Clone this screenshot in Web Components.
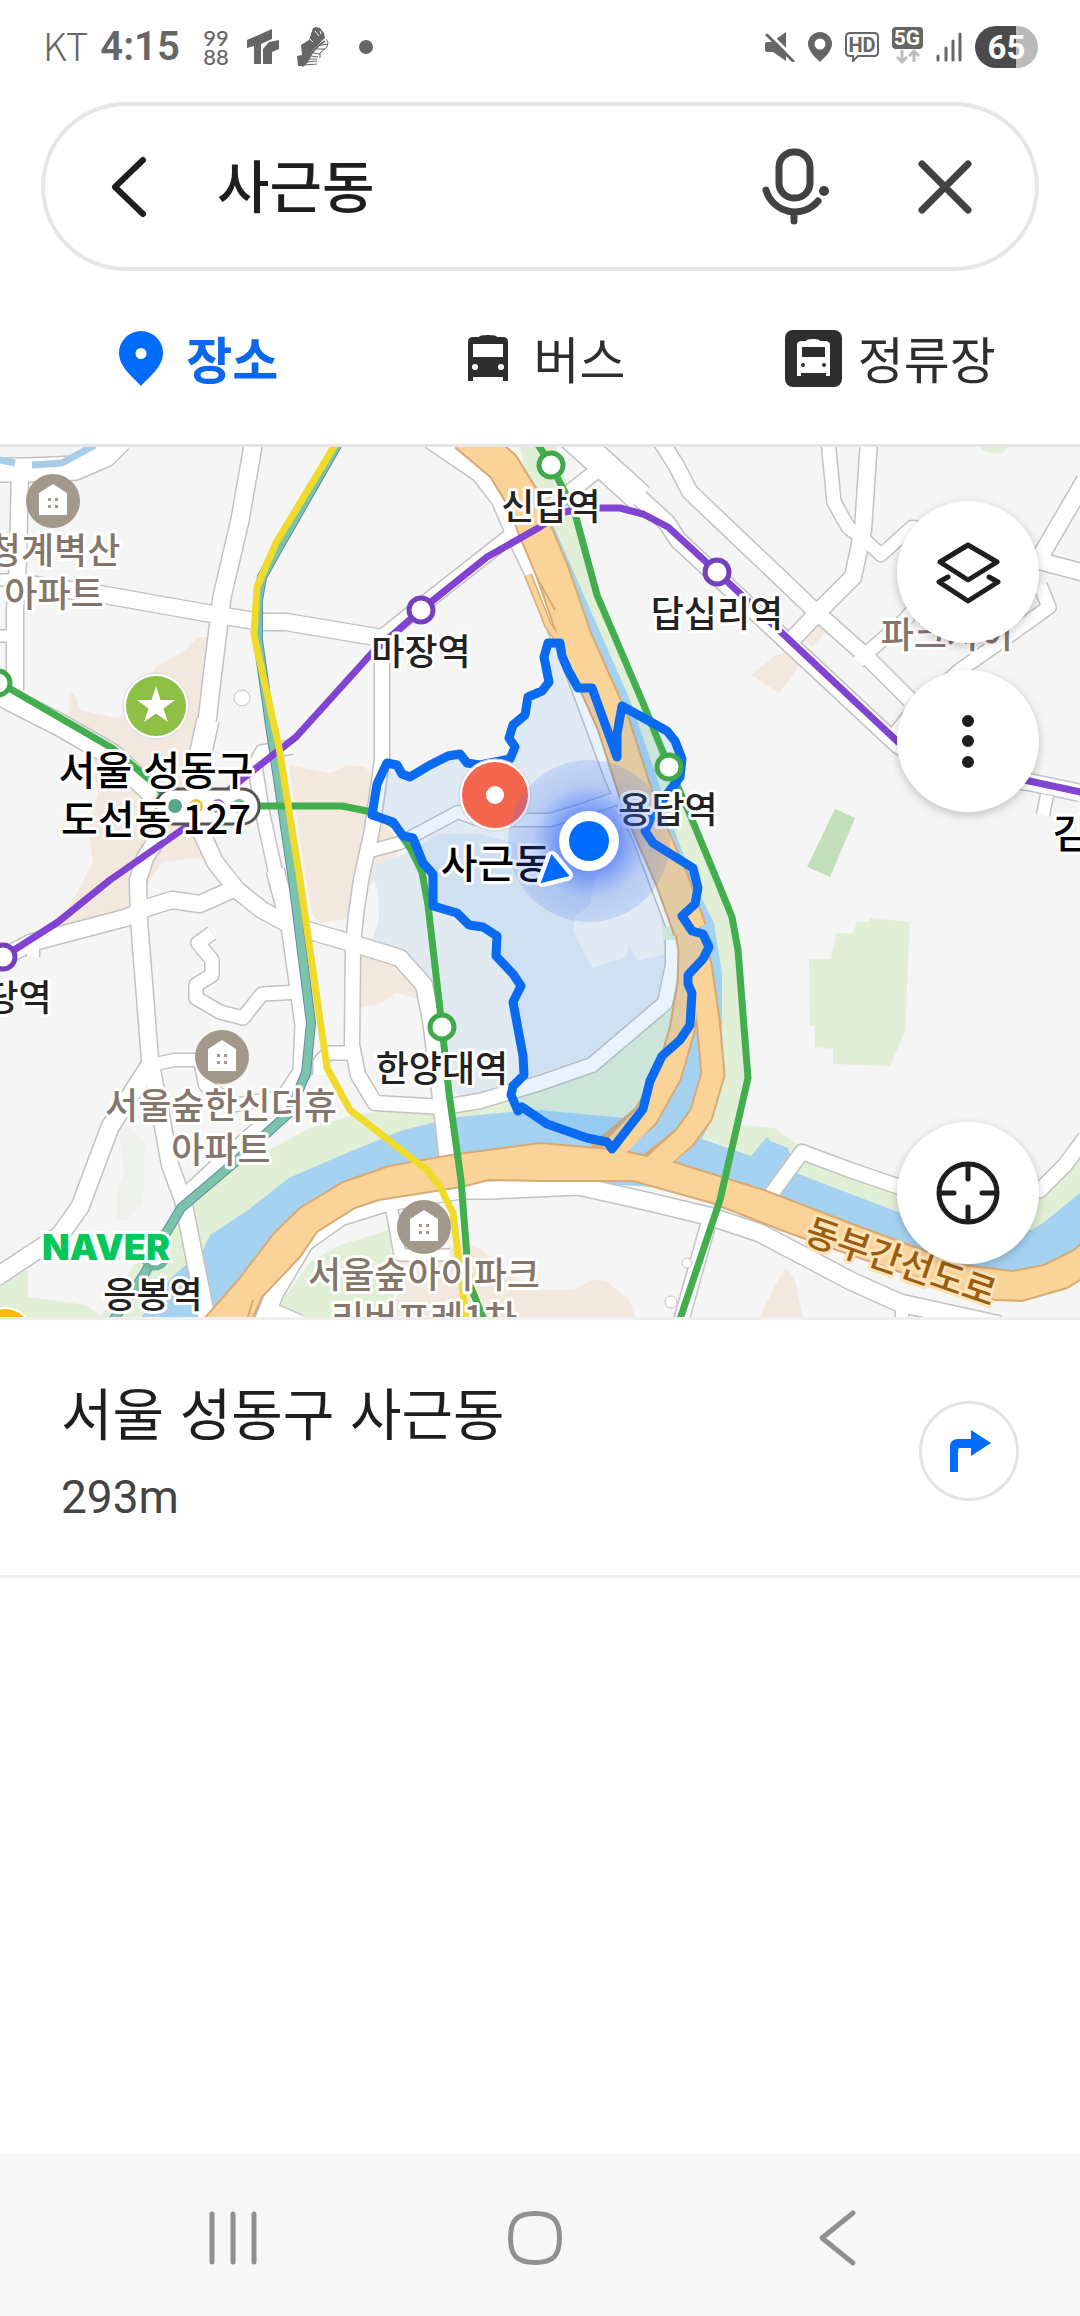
<!DOCTYPE html>
<html lang="ko">
<head>
<meta charset="utf-8">
<meta name="viewport" content="width=device-width, initial-scale=1">
<title>사근동</title>
<style>
    body {
        margin: 0;
        background: #fff;
        color: #1e1e1e;
        font-family: "Noto Sans CJK KR", "Noto Sans", sans-serif;
    }
</style>
</head>
<body>
<map-app>
    <status-bar slot="top" carrier="KT" time="4:15" battery="65"></status-bar>
    <search-bar slot="top" value="사근동"></search-bar>
    <search-tabs slot="top">
        <search-tab icon="place" selected>장소</search-tab>
        <search-tab icon="bus">버스</search-tab>
        <search-tab icon="stop">정류장</search-tab>
    </search-tabs>
    <area-map></area-map>
    <place-result distance="293m">서울 성동구 사근동</place-result>
    <system-nav slot="bottom"></system-nav>
</map-app>

<script>
class MapApp extends HTMLElement {
    constructor() {
        super();
        this.attachShadow({mode: 'open'});
        this.shadowRoot.innerHTML = `
            <style>
                :host { display: flex; flex-direction: column; min-height: 100vh; }
                header { border-bottom: 3px solid #e5e5e5; }
                main { flex: 1; }
            </style>
            <header><slot name="top"></slot></header>
            <main><slot></slot></main>
            <slot name="bottom"></slot>
            `;
    }
}
customElements.define("map-app", MapApp);

class StatusBar extends HTMLElement {
    constructor() {
        super();
        this.attachShadow({mode: 'open'});
        this.shadowRoot.innerHTML = `
            <style>
                :host {
                    display: flex;
                    align-items: center;
                    justify-content: space-between;
                    height: 94px;
                    padding: 0 42px 8px 43px;
                    color: #666;
                }
                div { display: flex; align-items: center; }
                .texts { gap: 12px; font-size: 38px; line-height: 48px; }
                .carrier { font-weight: 300; padding-bottom: 4px; }
                .time { font-family: Roboto, sans-serif; font-size: 40px; font-weight: 600; }
                .apps { gap: 18px; margin-left: 23px; }
                .icons { gap: 13px; }
                .dot { width: 14px; height: 14px; border-radius: 50%; background: currentColor; margin-left: 12px; }
                .battery {
                    width: 63px;
                    height: 42px;
                    border-radius: 21px;
                    justify-content: center;
                    color: #fff;
                    font: bold 33px Roboto, sans-serif;
                    background: linear-gradient(90deg, #4b4b4b 65%, #bababa 65%);
                }
                svg { display: block; fill: currentColor; }
            </style>
            <div>
                <div class="texts"><span class="carrier"></span><span class="time"></span></div>
                <div class="apps">
                    <svg width="26" height="50" viewBox="0 0 26 50" font-family="Lato, sans-serif" font-size="22" font-weight="500">
                        <text x="13" y="24" text-anchor="middle">99</text>
                        <text x="13" y="43" text-anchor="middle">88</text>
                    </svg>
                    <svg width="32" height="36" viewBox="0 0 32 36">
                        <path d="M0 11L25 0V10L14 15V35H7V17L0 19Z"/>
                        <path d="M16 35V20L22 13L32 11V20L25 23V35Z"/>
                    </svg>
                    <svg width="32" height="40" viewBox="0 0 32 40">
                        <path d="M16 1L19 0L23 1L27 6L28 11C24 15 17 21 14 26C11 31 8 37 6 39H1L0 29L5 28L4 18L12 13Z"/>
                        <path d="M18 4L22 9M23 4L24 7M13 12L16 15" fill="none" stroke="#fff" stroke-width="1"/>
                        <path d="M28 14C20 19 15 25 12 31C10 35 8 38 5 39" fill="none" stroke="currentColor" stroke-width="2"/>
                        <path d="M20 19L30 17M18 22L28 22M16 26L23 27M14 29L21 30M12 32H20M10 35L20 34M7 38L20 37M29 12L31 15L30 20L23 26V31" fill="none" stroke="currentColor" stroke-width="1"/>
                    </svg>
                    <i class="dot"></i>
                </div>
            </div>
            <div class="icons">
                <svg width="30" height="30" viewBox="0 0 30 30">
                    <path d="M2 10H7L21 0V29L8 20H2Q0 20 0 17V13Q0 10 2 10Z"/>
                    <path d="M4 1L30 27" stroke="#fff" stroke-width="3"/>
                    <path d="M2 3L28 29" stroke="currentColor" stroke-width="3" stroke-linecap="round"/>
                </svg>
                <svg width="24" height="30" viewBox="0 0 24 30">
                    <path fill-rule="evenodd" d="M12 0A12 12 0 0 1 24 12C24 19 16 26 12 30C8 26 0 19 0 12A12 12 0 0 1 12 0ZM12 6.500A5.500 5.500 0 1 0 12 17.500A5.500 5.500 0 1 0 12 6.500Z"/>
                </svg>
                <svg width="34" height="30" viewBox="0 0 34 30">
                    <path d="M5 1H29Q33 1 33 5V20Q33 24 29 24H13L8 29V24H5Q1 24 1 20V5Q1 1 5 1Z" fill="none" stroke="currentColor" stroke-width="2"/>
                    <text x="17" y="20" text-anchor="middle" font-family="Roboto, sans-serif" font-weight="bold" font-size="20">HD</text>
                </svg>
                <svg width="31" height="44" viewBox="0 0 31 44">
                    <rect y="2" width="31" height="22" rx="4"/>
                    <text x="15" y="20" text-anchor="middle" fill="#fff" font-family="Roboto, sans-serif" font-weight="bold" font-size="21">5G</text>
                    <path d="M10 25V36M5 32L10 37L15 32M22 37V26M17 31L22 26L27 31" fill="none" stroke="#bdbdbd" stroke-width="3"/>
                </svg>
                <svg width="26" height="30" viewBox="0 0 26 30">
                    <path d="M2 24V28M10 16V28M17 9V28M24 2V28" stroke="currentColor" stroke-width="3" stroke-linecap="round"/>
                </svg>
                <div class="battery"></div>
            </div>
            `;
    }
    connectedCallback() {
        this.shadowRoot.querySelector('.carrier').textContent = this.getAttribute('carrier');
        this.shadowRoot.querySelector('.time').textContent = this.getAttribute('time');
        this.shadowRoot.querySelector('.battery').textContent = this.getAttribute('battery');
    }
}
customElements.define("status-bar", StatusBar);

class SearchBar extends HTMLElement {
    constructor() {
        super();
        this.attachShadow({mode: 'open'});
        this.shadowRoot.innerHTML = `
            <style>
                :host { display: block; margin: 0 41px; }
                form {
                    display: flex;
                    align-items: center;
                    box-sizing: border-box;
                    height: 169px;
                    padding: 0 58px 0 52px;
                    border: 4px solid #e6e6e6;
                    border-radius: 85px;
                }
                button { flex: none; width: 64px; height: 80px; padding: 0; border: 0; background: none; }
                input {
                    flex: 1;
                    min-width: 0;
                    height: 84px;
                    margin: 0 24px 0 56px;
                    padding: 0 0 8px;
                    border: 0;
                    outline: 0;
                    background: none;
                    color: #1e1e1e;
                    font: 500 57px "Noto Sans CJK KR", sans-serif;
                }
                .clear { margin-left: 86px; }
                svg { display: block; overflow: visible; fill: none; stroke: #424242; stroke-width: 7; stroke-linecap: round; stroke-linejoin: round; }
                .back svg { stroke: #1e1e1e; stroke-width: 6; }
            </style>
            <form>
                <button type="button" class="back" aria-label="뒤로">
                    <svg width="64" height="80" viewBox="0 0 64 80"><path d="M46 13L18 40L46 67"/></svg>
                </button>
                <input type="text" aria-label="검색">
                <button type="button" aria-label="음성 검색">
                    <svg width="64" height="80" viewBox="0 0 64 80">
                        <rect x="16" y="5" width="31" height="46" rx="15"/>
                        <path d="M3 43A30 30 0 0 0 55 54M31 66V74"/>
                        <circle cx="61" cy="44" r="5" fill="#424242" stroke="none"/>
                    </svg>
                </button>
                <button type="button" class="clear" aria-label="지우기">
                    <svg width="64" height="80" viewBox="0 0 64 80"><path d="M9 17L55 63M55 17L9 63"/></svg>
                </button>
            </form>
            `;
    }
    connectedCallback() {
        const input = this.shadowRoot.querySelector('input');
        input.value = this.getAttribute('value');
        this.shadowRoot.querySelector('.clear').addEventListener('click', () => { input.value = ''; });
    }
}
customElements.define("search-bar", SearchBar);

class SearchTabs extends HTMLElement {
    constructor() {
        super();
        this.attachShadow({mode: 'open'});
        this.shadowRoot.innerHTML = `
            <style>
                :host { display: block; }
                nav { display: grid; grid-template-columns: repeat(3, 1fr); padding: 0 16px 0 22px; height: 173px; align-items: center; }
            </style>
            <nav><slot></slot></nav>
            `;
    }
}
customElements.define("search-tabs", SearchTabs);

const TAB_ICONS = {
    place: `<path fill="#006cff" fill-rule="evenodd" d="M28 1A22 22 0 0 1 50 23C50 37 36 47 28 56C20 47 6 37 6 23A22 22 0 0 1 28 1ZM28 18A5.500 5.500 0 1 0 28 29A5.500 5.500 0 1 0 28 18Z"/>`,
    bus: `<path fill="#2e2e2e" fill-rule="evenodd" d="M19 7Q19 5 28 5Q37 5 37 7H43Q48 7 48 12V51H43V47H13V51H8V12Q8 7 13 7H19ZM13 14V27H43V14ZM15 34A3 3 0 1 0 15 40A3 3 0 1 0 15 34ZM41 34A3 3 0 1 0 41 40A3 3 0 1 0 41 34Z"/>`,
    stop: `<rect width="57" height="57" rx="8" fill="#2e2e2e"/>
        <path fill="#fff" fill-rule="evenodd" d="M21 11Q21 9 28 9Q35 9 35 11H40Q45 11 45 15V46H41V43H16V46H12V15Q12 11 17 11H21ZM17 17V27H40V17ZM18 33A2 2 0 1 0 18 37A2 2 0 1 0 18 33ZM39 33A2 2 0 1 0 39 37A2 2 0 1 0 39 33Z"/>`
};

class SearchTab extends HTMLElement {
    constructor() {
        super();
        this.attachShadow({mode: 'open'});
        this.shadowRoot.innerHTML = `
            <style>
                :host { display: flex; justify-content: center; }
                button {
                    display: flex;
                    align-items: center;
                    gap: 16px;
                    padding: 2px 0 0;
                    border: 0;
                    background: none;
                    color: #2e2e2e;
                    font: 400 50px/72px "Noto Sans CJK KR", sans-serif;
                }
                :host([selected]) button { color: #0a68ee; font-weight: 700; }
                span { padding-bottom: 4px; }
                svg { display: block; }
            </style>
            <button type="button"><svg width="57" height="57" viewBox="0 0 57 57"></svg><span><slot></slot></span></button>
            `;
    }
    connectedCallback() {
        this.shadowRoot.querySelector('svg').innerHTML = TAB_ICONS[this.getAttribute('icon')];
    }
}
customElements.define("search-tab", SearchTab);

// [width, path], every street gets a grey casing under a white fill
const STREETS = [
    [18, "M254 440L240 520L222 597L213 670L206 730"],
    [22, "M208 720L198 765V830"],
    [17, "M198 825L215 862L237 890L262 910L290 925L358 945L400 958L424 985L431 1020L440 1090L448 1160"],
    [17, "M20 583L105 595L212 614L262 622L286 622L382 638"],
    [15, "M382 637L420 607L509 537L560 500L600 468"],
    [17, "M430 440L480 474L500 500L515 535L546 600L560 640"],
    [13, "M546 600L560 640L612 780L640 840L672 925"],
    [28, "M570 435L607 468L640 498"],
    [17, "M607 468L667 523L678 540L764 620L898 745L940 770L1029 782L1080 793"],
    [16, "M660 440L676 465L690 492L812 608L867 657L910 700"],
    [14, "M828 440L834 502L848 527L862 538"],
    [17, "M869 440L863 530L853 577L820 610L790 642"],
    [13, "M865 540L881 555L912 527L930 530"],
    [17, "M1085 480L1043 552V562L1085 573"],
    [14, "M1040 585L1049 607L1010 635L960 670L910 715L890 740"],
    [14, "M858 662L867 653L905 620L915 608"],
    [13, "M1047 795L1043 815"],
    [17, "M20 470L18 560L15 610V690"],
    [12, "M-5 636H16"],
    [12, "M-5 580H16"],
    [24, "M-5 470H30L75 468L105 455L120 440"],
    [22, "M-5 692L60 725L112 755L155 795"],
    [15, "M382 637V760L372 830L361 880L356 915L353 945L352 1045L358 1075L375 1103L444 1107L480 1101L540 1083L592 1065L665 1003L673 965V940"],
    [13, "M370 851L400 843L458 812L480 820H550L580 811L620 797"],
    [14, "M292 747L262 752L255 765L262 810L275 870L290 925"],
    [18, "M275 870L290 925L304 1025L302 1072L270 1120L220 1165L188 1195"],
    [17, "M160 835L145 858L138 880L139 920L150 1060L160 1110L170 1165L183 1200L208 1325"],
    [17, "M140 910L172 900L200 904L240 886"],
    [17, "M140 912L125 918L30 943L-5 962"],
    [13, "M33 945V957"],
    [14, "M212 933L198 943L212 960V975L196 985V998L220 1012L243 1018L262 994L300 992"],
    [13, "M155 1064L175 1060H200L205 1085L235 1105L290 1095"],
    [18, "M150 1065L110 1127L80 1207L60 1235L-5 1278"],
    [14, "M320 1075V1062L328 1053H352"],
    [18, "M262 1325L275 1292L305 1242L340 1217L388 1202L460 1190H490L578 1186L650 1202L712 1217L760 1233L851 1281L900 1303L1000 1325"],
    [12, "M392 1210L400 1255H450"],
    [15, "M708 1225L680 1325"],
    [13, "M902 1305V1325"],
    [14, "M268 1308L300 1322"],
    [15, "M767 1200L802 1152L850 1170L900 1187L980 1200L1040 1190L1065 1165L1085 1138"]
];

// [x, y, line colour]
const STATIONS = [
    [551, 465, "#41a84c"], [421, 610, "#7540bd"], [717, 572, "#7540bd"], [669, 767, "#41a84c"],
    [442, 1027, "#41a84c"], [-2, 683, "#41a84c"], [3, 957, "#7540bd"], [155, 1256, "#6db59c"]
];

const APARTMENTS = [[53, 501], [222, 1057], [424, 1227]];

// [kind, x, baseline, text]
const LABELS = [
    ["station", 551, 520, "신답역"],
    ["station", 421, 665, "마장역"],
    ["station", 717, 627, "답십리역"],
    ["station", 668, 823, "용답역"],
    ["station", 442, 1082, "한양대역"],
    ["station", 153, 1308, "응봉역"],
    ["station", 2, 1011, "신당역"],
    ["apartment", 54, 564, "청계벽산"],
    ["apartment", 54, 607, "아파트"],
    ["apartment", 221, 1119, "서울숲한신더휴"],
    ["apartment", 221, 1163, "아파트"],
    ["apartment", 424, 1288, "서울숲아이파크"],
    ["apartment", 424, 1332, "리버프레1차"],
    ["apartment", 947, 648, "파크자이"],
    ["place", 156, 785, "서울 성동구"],
    ["place", 156, 834, "도선동 127"],
    ["place", 496, 878, "사근동"],
    ["place", 1071, 848, "김"]
];

const DISTRICT = `M548 643H560L562 656L568 670L578 688H592L617 757V734L622 706L667 731L675 741L682 759L680 777
    L653 813L645 831L653 843L693 868L698 888L695 904L682 916L692 931L703 934L709 947L703 959L688 975V984L692 993
    L690 1025L680 1040L662 1056L650 1081L643 1109L612 1149L607 1142L587 1138L547 1124L522 1107L518 1111L511 1095
    L513 1086L524 1075L523 1056L513 1002L521 986L513 974L496 956L497 936L483 927L469 925L457 913L433 906V874
    L423 863L413 838L403 836L393 822L372 815L377 784L387 763L397 765L402 774L410 777L430 765L448 756L460 754
    L467 763L480 765L510 759L515 747L509 738L513 725L525 715L528 697L542 691L549 682L544 657Z`;

class AreaMap extends HTMLElement {
    constructor() {
        super();
        this.attachShadow({mode: 'open'});
        const casings = STREETS.map(([w, d]) => `<path d="${d}" stroke-width="${w + 2}"/>`).join('');
        const fills = STREETS.map(([w, d]) => `<path d="${d}" stroke-width="${w - 1}"/>`).join('');
        const stations = STATIONS.map(([x, y, c]) => `<circle cx="${x}" cy="${y}" r="12" stroke="${c}"/>`).join('');
        const houses = APARTMENTS.map(([x, y]) => `<use href="#house" x="${x}" y="${y}"/>`).join('');
        const labels = LABELS.map(([kind, x, y, text]) => `<text class="${kind}" x="${x}" y="${y}">${text}</text>`).join('');
        this.shadowRoot.innerHTML = `
            <style>
                :host { display: block; position: relative; overflow: hidden; border-bottom: 3px solid #efefef; }
                .map { display: block; width: 100%; height: auto; background: #f5f5f5; }
                .line { fill: none; stroke-linejoin: round; }
                .beige { fill: #f3e8de; }
                .green { fill: #e1efd7; }
                .water { fill: #a6d2f2; }
                text {
                    text-anchor: middle;
                    font-family: "Noto Sans CJK KR", sans-serif;
                    font-size: 36px;
                    font-weight: 500;
                    paint-order: stroke;
                    stroke: #fff;
                    stroke-width: 6px;
                    stroke-linejoin: round;
                }
                .station { fill: #222; }
                .apartment { fill: #85766c; }
                .place { fill: #000; font-size: 40px; }
                .highway { fill: #9b5d10; stroke: #fde3b8; }
                .logo { fill: #03c75a; font-family: Inter, sans-serif; font-size: 36px; font-weight: 900; }
                .controls {
                    position: absolute;
                    inset: 54px 41px 53px auto;
                    display: flex;
                    flex-direction: column;
                    gap: 27px;
                }
                button {
                    width: 142px;
                    height: 142px;
                    padding: 0;
                    border: 0;
                    border-radius: 50%;
                    background: #fff;
                    box-shadow: 0 3px 10px rgba(0, 0, 0, .22);
                }
                button:last-child { margin-top: auto; }
                button svg { display: block; fill: none; stroke: #1e1e1e; stroke-width: 5; stroke-linecap: round; stroke-linejoin: round; }
            </style>
            <svg class="map" viewBox="0 447 1080 870" role="img" aria-label="지도">
                <defs>
                    <radialGradient id="accuracy">
                        <stop offset="0" stop-color="#2a55ff" stop-opacity=".8"/>
                        <stop offset=".35" stop-color="#2a5cf5" stop-opacity=".62"/>
                        <stop offset=".7" stop-color="#3a6cf0" stop-opacity=".24"/>
                        <stop offset="1" stop-color="#3a6cf0" stop-opacity=".16"/>
                    </radialGradient>
                    <g id="house">
                        <circle r="27" fill="#a2998c"/>
                        <path d="M0 -17L14 -8V14H-14V-8Z" fill="#fff"/>
                        <path d="M-5 -3h3v3h-3zM2 -3h3v3h-3zM-5 4h3v3h-3zM2 4h3v3h-3z" fill="#a2998c"/>
                    </g>
                </defs>

                <g class="beige">
                    <path d="M69 693H74L80 710L117 718L128 713L155 668L185 650L198 637H207L198 740L190 800L215 860L198 858L162 862L150 880L131 913L41 930L69 907L84 880L93 860L88 830L98 793L90 757L71 735Z"/>
                    <path d="M289 765L331 773L348 765L365 767L374 778L372 810L403 845L390 865L370 885L356 917L335 921L320 923L312 913L303 860Z"/>
                    <path d="M361 955L396 965L417 980L424 1000L396 993L382 1003L361 1007Z"/>
                    <path d="M759 1318L778 1280L786 1268L795 1280L803 1318Z"/>
                    <path d="M751 675L776 655L790 652L802 663L779 693ZM805 640L824 610L840 618L812 647Z"/>
                </g>
                <path fill="#eef0ec" d="M117 1120L145 1140L143 1203L127 1220H117V1190L124 1173Z"/>
                <path fill="#e2eaf1" d="M370 870L377 863L400 856L440 834H480L520 845L595 877L590 905L575 916L573 931L592 968L625 958L629 946L638 961L670 953L673 965L662 995L593 1056L527 1077L463 1098L443 1084L430 995L420 977L370 945L379 920L378 890Z"/>
                <g class="green">
                    <path d="M520 447H556L574 507L597 595L643 703L667 757L688 807L717 880L730 917L738 950L748 1077L740 1125L774 1128L798 1145L900 1185L1000 1205L1050 1180L1080 1145V1250L940 1270L700 1190L480 1175L380 1195L300 1230L230 1318H100L150 1240L190 1200L240 1160L275 1147L310 1128L344 1118L365 1113L460 1108L527 1088L593 1062L668 1000L660 900L600 700L530 500Z"/>
                    <path d="M0 1280L28 1270V1297L86 1305L103 1318H0Z"/>
                    <path d="M270 1318L310 1262L340 1245L390 1230L395 1318Z"/>
                    <path d="M809 959H831L836 933H853L857 922H869L870 918L910 922L905 1031L890 1066L833 1064V1049L815 1047V1026H810Z"/>
                    <path d="M981 447H1007V450L998 454L981 450Z"/>
                </g>
                <path class="beige" d="M400 1260L465 1243L482 1250L510 1275L540 1290H574L592 1280L606 1281L630 1300L635 1318H395Z"/>
                <path fill="#c2dfb9" d="M835 809L855 818L830 877L807 867Z"/>
                <path class="water" d="M490 447H505L524 467L536 487L554 527L630 700L660 787L678 840L695 885L714 923L722 973V1030L724 1075L712 1118L702 1139L751 1156L767 1137L770 1141L788 1148L796 1173L898 1212L1032 1230L1043 1223L1080 1193V1260L1000 1280L940 1262L700 1190L540 1180L380 1195L300 1230L215 1318H141L152 1300L172 1277L203 1250L210 1235L248 1210L289 1178L337 1157L403 1130L458 1117L510 1112L540 1110L623 1118L660 1090L685 1040L690 950L650 800L560 600Z"/>

                <g class="line" stroke="#c2c2c2">${casings}</g>
                <g class="line" stroke="#fff">${fills}</g>
                <path class="line" d="M-5 459L15 463M32 465L62 463L95 445" stroke="#a9cde8" stroke-width="7"/>
                <g fill="#fff" stroke="#c2c2c2" stroke-width="1">
                    <circle cx="242" cy="698" r="8"/><circle cx="687" cy="1263" r="5"/><circle cx="671" cy="1302" r="6"/>
                </g>

                <g class="line" stroke="#d9aa74">
                    <path d="M466 435L503 466L522 497L535 530L553 573L576 640L613 723L640 807L672 880L690 930" stroke-width="35"/>
                    <path d="M528 575L548 625L565 650" stroke-width="8"/>
                    <path d="M686 920L691 950L690 985L682 1030L669 1075L646 1116L600 1155" stroke-width="27"/>
                    <path d="M686 920L700 965L708 1020L713 1074L701 1115L684 1138L650 1165" stroke-width="25"/>
                </g>
                <path fill="#f9d398" stroke="#d9aa74" stroke-width="2" d="M203 1320L238 1280L275 1232L300 1208L343 1182L389 1166L451 1155L540 1143L620 1150L674 1162L764 1190L850 1223L963 1265L1013 1271L1044 1265L1074 1250L1082 1243V1279L1067 1288L1022 1301L995 1300L900 1272L808 1240L781 1230L712 1203L633 1181L540 1181L489 1180L461 1187L379 1200L355 1208L317 1232L300 1257L262 1297L252 1320Z"/>
                <g class="line" stroke="#f9d398">
                    <path d="M466 435L503 466L522 497L535 530L553 573L576 640L613 723L640 807L672 880L690 930" stroke-width="31"/>
                    <path d="M528 575L548 625L565 650" stroke-width="5"/>
                    <path d="M686 920L691 950L690 985L682 1030L669 1075L646 1116L610 1153" stroke-width="23"/>
                    <path d="M686 920L700 965L708 1020L713 1074L701 1115L684 1138L655 1164" stroke-width="21"/>
                </g>
                <path d="M540 583L555 610M247 1320L253 1300" class="line" stroke="#d9aa74" stroke-width="2"/>

                <path d="${DISTRICT}" fill="#2d91f5" fill-opacity=".11"/>

                <g class="line" stroke-width="7">
                    <path d="M340 440L280 545L262 577L258 600V640L270 725L293 880L311 1023L306 1073L289 1113L234 1163L181 1208L165 1235L145 1273L112 1322" stroke="#5b8fa0" stroke-width="10"/>
                    <path d="M340 440L280 545L262 577L258 600V640L270 725L293 880L311 1023L306 1073L289 1113L234 1163L181 1208L165 1235L145 1273L112 1322" stroke="#7cc3ac" stroke-width="8"/>
                    <path d="M-5 680L112 748L150 780L175 806H342L372 812L395 826L410 848L422 872L428 905L442 1027L449 1093L461 1180L467 1257L470 1285L486 1325" stroke="#42ae4d"/>
                    <path d="M535 440L551 465L574 510L597 595L643 703L669 767L688 810L717 880L732 917L738 950L748 1078L740 1113L720 1200L678 1325" stroke="#42ae4d"/>
                    <path d="M0 959L58 922L110 880L186 827L241 780L296 737L372 653L396 632L421 610L487 557L540 527L560 513L585 508H620L643 514L668 527L717 572L765 617L898 742L960 768L1029 781L1085 793" stroke="#8143d1"/>
                    <path d="M338 440L276 543L257 587L254 635L279 747L300 880L327 1068L350 1110L427 1170L440 1187L453 1213L460 1270L467 1325" stroke="#f0da2a"/>
                </g>
                <path class="line" d="${DISTRICT}" stroke="#0b6bf0" stroke-width="9"/>

                <g fill="#fff" stroke-width="5">${stations}</g>
                <rect x="156" y="789" width="103" height="35" rx="17" fill="#fff" stroke="#555" stroke-width="3"/>
                <circle cx="175" cy="806" r="7" fill="#54a98a"/>
                <circle cx="196" cy="806" r="7" fill="#f3bf45"/>
                <circle cx="218" cy="806" r="7" fill="#a272d8"/>
                <circle cx="239" cy="806" r="7" fill="#6abf85"/>
                ${houses}
                <circle cx="156" cy="706" r="33" fill="#fff" stroke="#d8d8d8"/>
                <circle cx="156" cy="706" r="30" fill="#8dc045"/>
                <path d="M156 686L160.500 700H175L163.500 708.500L168 722L156 713.500L144 722L148.500 708.500L137 700H151.500Z" fill="#fff"/>
                <circle cx="5" cy="1336" r="28" fill="#fdb90f" stroke="#fff" stroke-width="2"/>
                ${labels}
                <text class="highway" x="901" y="1275" transform="rotate(19 901 1262)">동부간선도로</text>
                <text class="logo" x="106" y="1260">NAVER</text>

                <circle cx="495" cy="795" r="36" fill="#fff" stroke="#dcc9c9"/>
                <circle cx="495" cy="795" r="33" fill="#f5664f"/>
                <circle cx="495" cy="795" r="9" fill="#fff"/>
                <circle cx="589" cy="841" r="81" fill="url(#accuracy)"/>
                <circle cx="589" cy="841" r="30" fill="#fff"/>
                <circle cx="589" cy="841" r="20" fill="#006cff"/>
                <path d="M552 857L567 875L543 881Z" fill="#fff" stroke="#fff" stroke-width="12" stroke-linejoin="round"/>
                <path d="M552 857L567 875L543 881Z" fill="#006cff" stroke="#006cff" stroke-width="3"/>
            </svg>
            <div class="controls">
                <button type="button" aria-label="지도 유형">
                    <svg width="142" height="142" viewBox="0 0 142 142"><path d="M71 44L100 61L71 79L43 61ZM51 76L42 81L71 100L101 81L92 76"/></svg>
                </button>
                <button type="button" aria-label="더보기">
                    <svg width="142" height="142" viewBox="0 0 142 142"><path d="M71 51h0M71 71h0M71 92h0" style="stroke-width: 12"/></svg>
                </button>
                <button type="button" aria-label="현재 위치">
                    <svg width="142" height="142" viewBox="0 0 142 142"><circle cx="71" cy="71" r="29"/><path d="M71 43V57M71 85V99M43 71H57M85 71H99"/></svg>
                </button>
            </div>
            `;
    }
}
customElements.define("area-map", AreaMap);

class PlaceResult extends HTMLElement {
    constructor() {
        super();
        this.attachShadow({mode: 'open'});
        this.shadowRoot.innerHTML = `
            <style>
                :host { display: block; border-bottom: 3px solid #efefef; }
                article { display: flex; align-items: center; justify-content: space-between; padding: 57px 61px 50px; }
                h2 { margin: 0 0 24px; font-size: 56px; font-weight: 400; line-height: 68px; }
                p { margin: 0; color: #444; font: 46px/56px Roboto, sans-serif; }
                button {
                    box-sizing: border-box;
                    width: 100px;
                    height: 100px;
                    padding: 0;
                    border: 3px solid #e3e3e3;
                    border-radius: 50%;
                    background: #fff;
                }
                svg { display: block; margin: auto; }
            </style>
            <article>
                <div>
                    <h2><slot></slot></h2>
                    <p></p>
                </div>
                <button type="button" aria-label="길찾기">
                    <svg width="44" height="44" viewBox="0 0 44 44"><path fill="#006cff" d="M3 43V18Q3 10 11 10H24V1L44 14L24 27V19H13Q11 19 11 21V43Z"/></svg>
                </button>
            </article>
            `;
    }
    connectedCallback() {
        this.shadowRoot.querySelector('p').textContent = this.getAttribute('distance');
    }
}
customElements.define("place-result", PlaceResult);

class SystemNav extends HTMLElement {
    constructor() {
        super();
        this.attachShadow({mode: 'open'});
        this.shadowRoot.innerHTML = `
            <style>
                :host { display: block; background: #f7f7f7; }
                nav { display: grid; grid-template-columns: repeat(3, 1fr); padding: 0 92px 0 82px; height: 162px; }
                button { padding: 6px 0 0; border: 0; background: none; }
                svg { display: block; margin: auto; fill: none; stroke: #909090; stroke-width: 5; stroke-linecap: round; stroke-linejoin: round; }
            </style>
            <nav>
                <button type="button" aria-label="최근 앱"><svg width="60" height="60" viewBox="0 0 60 60"><path d="M9 6V54M30 6V54M51 6V54"/></svg></button>
                <button type="button" aria-label="홈"><svg width="60" height="60" viewBox="0 0 60 60"><path d="M30 5.500C48 5.500 54.500 12 54.500 30S48 54.500 30 54.500S5.500 48 5.500 30S12 5.500 30 5.500Z"/></svg></button>
                <button type="button" aria-label="뒤로"><svg width="60" height="60" viewBox="0 0 60 60"><path d="M46 5L15 30L46 55"/></svg></button>
            </nav>
            `;
    }
}
customElements.define("system-nav", SystemNav);
</script>
</body>
</html>
